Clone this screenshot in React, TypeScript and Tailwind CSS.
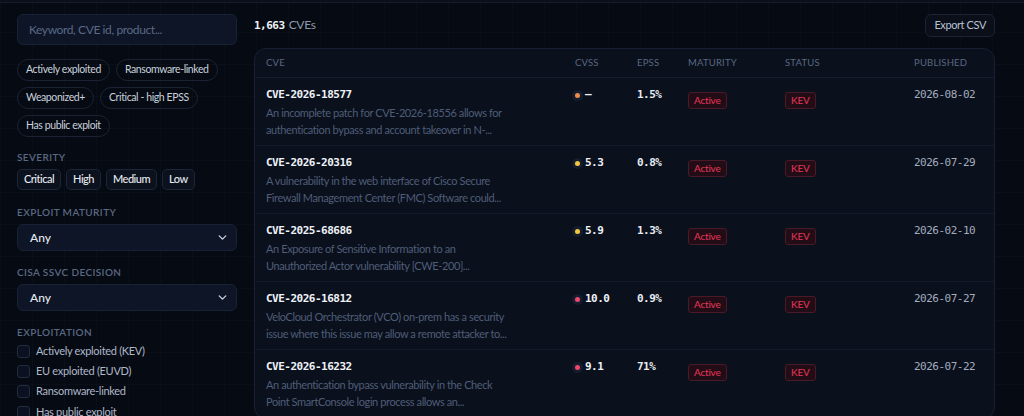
import { ChevronDown } from "lucide-react";

type Row = {
  id: string;
  desc: [string, string];
  cvss: string;
  dot: string;
  epss: string;
  published: string;
};

const rows: Row[] = [
  {
    id: "CVE-2026-18577",
    desc: ["An incomplete patch for CVE-2026-18556 allows for", "authentication bypass and account takeover in N-..."],
    cvss: "—",
    dot: "bg-[#f08a4b]",
    epss: "1.5%",
    published: "2026-08-02",
  },
  {
    id: "CVE-2026-20316",
    desc: ["A vulnerability in the web interface of Cisco Secure", "Firewall Management Center (FMC) Software could..."],
    cvss: "5.3",
    dot: "bg-[#f2c641]",
    epss: "0.8%",
    published: "2026-07-29",
  },
  {
    id: "CVE-2025-68686",
    desc: ["An Exposure of Sensitive Information to an", "Unauthorized Actor vulnerability [CWE-200]..."],
    cvss: "5.9",
    dot: "bg-[#f2c641]",
    epss: "1.3%",
    published: "2026-02-10",
  },
  {
    id: "CVE-2026-16812",
    desc: ["VeloCloud Orchestrator (VCO) on-prem has a security", "issue where this issue may allow a remote attacker to..."],
    cvss: "10.0",
    dot: "bg-[#f0466a]",
    epss: "0.9%",
    published: "2026-07-27",
  },
  {
    id: "CVE-2026-16232",
    desc: ["An authentication bypass vulnerability in the Check", "Point SmartConsole login process allows an..."],
    cvss: "9.1",
    dot: "bg-[#f0466a]",
    epss: "71%",
    published: "2026-07-22",
  },
];

const quickFilters = [
  "Actively exploited",
  "Ransomware-linked",
  "Weaponized+",
  "Critical - high EPSS",
  "Has public exploit",
];

const severities = ["Critical", "High", "Medium", "Low"];

const exploitation = [
  "Actively exploited (KEV)",
  "EU exploited (EUVD)",
  "Ransomware-linked",
  "Has public exploit",
];

function Label({ children }: { children: string }) {
  return (
    <div className="text-[10px] leading-[12px] font-semibold tracking-[0.04em] uppercase text-[#5a6883]">
      {children}
    </div>
  );
}

function Select({ value }: { value: string }) {
  return (
    <div className="mt-[6px] h-[27px] rounded-md border border-[#182236] bg-[#0d1526] flex items-center justify-between pl-[12px] pr-[7px]">
      <span className="text-[12px] font-medium text-[#e3e8f0]">{value}</span>
      <ChevronDown size={13} strokeWidth={2.6} className="text-[#c7cfdb]" />
    </div>
  );
}

function Badge({ children }: { children: string }) {
  return (
    <span className="inline-flex h-[17px] items-center rounded-[3px] border border-[#4a1a28] bg-[#220d16] px-[5px] text-[10px] tracking-[-0.2px] text-[#e8365a]">
      {children}
    </span>
  );
}

export default function App() {
  return (
    <div className="h-[416px] w-full overflow-hidden bg-[#060a12] bg-[linear-gradient(rgba(120,140,180,0.035)_1px,transparent_1px),linear-gradient(90deg,rgba(120,140,180,0.035)_1px,transparent_1px)] bg-[size:32px_32px] font-['Lato',sans-serif] text-[#dfe5ee]">
      <div className="h-[3px] border-b border-[#141b2a] bg-[#0a0f1a]" />
      <div className="flex pl-[17px] pt-[11px]">
        {/* filter sidebar */}
        <aside className="w-[220px] shrink-0">
          <div className="h-[31px] rounded-md border border-[#182236] bg-[#0d1526] flex items-center pl-[11px] text-[12px] tracking-[-0.4px] text-[#5b6986]">
            Keyword, CVE id, product...
          </div>

          <div className="mt-[14px] flex flex-wrap gap-[6px]">
            {quickFilters.map((f) => (
              <span
                key={f}
                className="h-[22px] rounded-full border border-[#1a2233] px-[8px] flex items-center text-[10.5px] tracking-[-0.4px] text-[#c9d1dd]"
              >
                {f}
              </span>
            ))}
          </div>

          <div className="mt-[14px]">
            <Label>Severity</Label>
            <div className="mt-[6px] flex gap-[5px]">
              {severities.map((s) => (
                <span
                  key={s}
                  className="h-[21px] rounded-[5px] border border-[#1d2638] bg-[#0b111d] px-[6px] flex items-center text-[11px] tracking-[-0.5px] font-medium text-[#e6ebf2]"
                >
                  {s}
                </span>
              ))}
            </div>
          </div>

          <div className="mt-[16px]">
            <Label>Exploit maturity</Label>
            <Select value="Any" />
          </div>

          <div className="mt-[15px]">
            <Label>CISA SSVC decision</Label>
            <Select value="Any" />
          </div>

          <div className="mt-[15px]">
            <Label>Exploitation</Label>
            <div className="mt-[3px] flex flex-col">
              {exploitation.map((e) => (
                <label key={e} className="h-[20.3px] flex items-center gap-[6px] text-[11px] tracking-[-0.3px] text-[#aeb8c9]">
                  <span className="h-[13px] w-[13px] rounded-[3px] border border-[#232c3e] bg-[#0b1120]" />
                  {e}
                </label>
              ))}
            </div>
          </div>
        </aside>

        {/* results */}
        <main className="ml-[17px] w-[741px] shrink-0">
          <div className="h-[23px] flex items-center justify-between">
            <div className="text-[12px]">
              <span className="font-['DejaVu_Sans_Mono',monospace] font-bold text-[11px] tracking-[-0.5px] text-[#eef2f7]">1,663</span>
              <span className="ml-[4px] tracking-[-0.3px] text-[#8d99ad]">CVEs</span>
            </div>
            <button className="h-[23px] rounded-md border border-[#1a2233] bg-[#0a0f1a] px-[8px] text-[11px] tracking-[-0.4px] text-[#b9c3d2]">
              Export CSV
            </button>
          </div>

          <div className="mt-[11px] rounded-xl border border-[#182033] bg-[#0a101c]">
            <div className="grid h-[29px] grid-cols-[309px_62px_51px_97px_129px_1fr] items-center border-b border-[#151c2b] px-[11px] text-[9.5px] uppercase tracking-[0.02em] text-[#5a6883]">
              <span>CVE</span>
              <span>CVSS</span>
              <span>EPSS</span>
              <span>Maturity</span>
              <span>Status</span>
              <span>Published</span>
            </div>
            {rows.map((r) => (
              <div
                key={r.id}
                className="grid h-[68px] grid-cols-[309px_62px_51px_97px_129px_1fr] items-start border-b border-[#131a28] px-[11px] pt-[10px]"
              >
                <div>
                  <div className="h-[14px] leading-[14px] font-['DejaVu_Sans_Mono',monospace] font-bold text-[11px] tracking-[-0.5px] text-[#eef2f7]">
                    {r.id}
                  </div>
                  <div className="mt-[2px] text-[11px] tracking-[-0.4px] leading-[17px] text-[#4f5d78] whitespace-nowrap">
                    <div>{r.desc[0]}</div>
                    <div>{r.desc[1]}</div>
                  </div>
                </div>
                <div className="h-[14px] flex items-center gap-[5px]">
                  <span className={`h-[5px] w-[5px] rounded-full ${r.dot} shadow-[0_0_0_3px_rgba(30,40,60,0.55)]`} />
                  <span className="font-['DejaVu_Sans_Mono',monospace] font-bold text-[11px] tracking-[-0.5px] text-[#eef2f7]">
                    {r.cvss}
                  </span>
                </div>
                <div className="h-[14px] leading-[14px] font-['DejaVu_Sans_Mono',monospace] font-bold text-[11px] tracking-[-0.5px] text-[#e6ebf2]">
                  {r.epss}
                </div>
                <div className="-mt-[2px]">
                  <Badge>Active</Badge>
                </div>
                <div className="-mt-[2px]">
                  <Badge>KEV</Badge>
                </div>
                <div className="h-[14px] leading-[14px] font-['DejaVu_Sans_Mono',monospace] text-[11px] tracking-[-0.5px] text-[#a3adbf]">
                  {r.published}
                </div>
              </div>
            ))}
          </div>
        </main>
      </div>
    </div>
  );
}
